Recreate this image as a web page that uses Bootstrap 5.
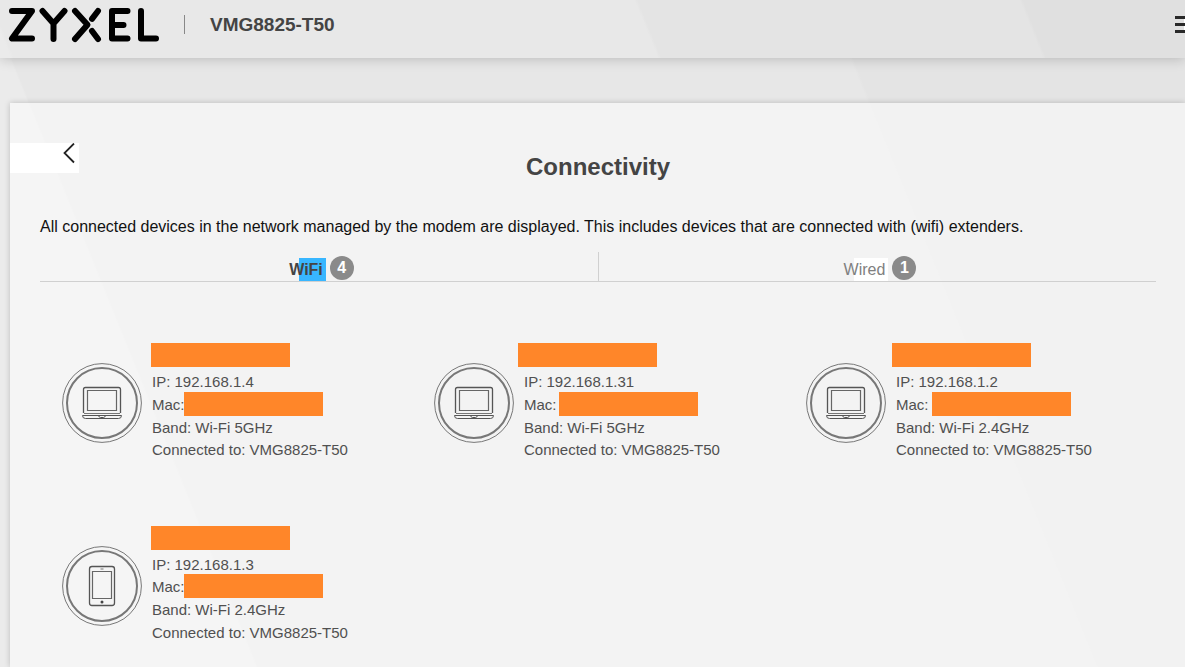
<!DOCTYPE html>
<html lang="en">
<head>
<meta charset="utf-8">
<meta name="viewport" content="width=device-width, initial-scale=1">
<title>VMG8825-T50 - Connectivity</title>
<link href="https://cdn.jsdelivr.net/npm/bootstrap@5.3.0/dist/css/bootstrap.min.css" rel="stylesheet">
<style>
body{font-family:"Liberation Sans",Arial,sans-serif;font-size:16px;color:#111;min-height:100vh;overflow-x:hidden;
 background:linear-gradient(68deg,#ebebeb 237px,#e7e7e7 239px,#e7e7e7 1016px,#e4e4e4 1019px) no-repeat}
.topbar{height:58px;position:relative;box-shadow:0 1px 12px rgba(0,0,0,.2);
 background:linear-gradient(68deg,#ebebeb 10px,#e8e8e8 13px,#e8e8e8 610px,#e4e4e4 613px,#e4e4e4 967px,#e0e0e0 970px)}
.model-name{font-size:19px;font-weight:700;color:#444;line-height:20px;margin:15px 0 0 25px}
.brand-rule{width:1px;height:19px;background:#888;margin:15px 0 0 24px}
.menu-btn{width:10px;height:17px;margin-top:16px;overflow:hidden}
.panel{margin:45px 0 0 10px;min-height:calc(100vh - 103px);padding:40px 29px 16px 30px;background:rgba(255,255,255,.5);box-shadow:0 0 6px rgba(0,0,0,.2)}
.back-btn{width:69px;height:30px;margin-left:-30px;background:#fff}
.page-title{font-size:24px;font-weight:700;color:#444;line-height:28px;margin:-20px 0 34px}
.tab-row{border-bottom:1px solid #d0d0d0;margin-top:13px}
.tab-link{height:29px;color:#808080;gap:4px;padding-top:4px;padding-left:5px}
.tab-link + .tab-link{border-left:1px solid #d0d0d0}
.tab-link.active{color:#444;font-weight:700}
.tab-text{line-height:23px;padding-right:3px;margin-top:2px;background:linear-gradient(90deg,transparent 10px,#fff 10px)}
.active .tab-text{background:linear-gradient(90deg,transparent 10px,#38b6ff 10px)}
.count{width:24px;height:24px;border-radius:50%;background:#8a8a8a;color:#fff;font-weight:700;line-height:24px}
.device-grid{padding-top:61px;row-gap:64px}
.device{padding-left:22px;gap:10px}
.device-icon{margin-top:20px}
.device-info{font-size:15px;line-height:1.5;color:#505050}
.hidden-value{display:block;width:139px;height:24px;background:#ff8629}
.host{margin:0 0 4px -1px}
.mac{margin:-2px 0 0 -1px}
.mac-line{height:23px}
.col-4:nth-child(2) .host{margin-left:-6px}
.col-4:nth-child(3) .host{margin-left:-4px}
.col-4:nth-child(2) .mac{margin-left:2px}
.col-4:nth-child(3) .mac{margin-left:3px}
</style>
<script src="https://cdn.jsdelivr.net/npm/bootstrap@5.3.0/dist/js/bootstrap.bundle.min.js"></script>
</head>
<body>
<svg class="d-none" aria-hidden="true">
 <symbol id="laptop" viewBox="0 0 80 80">
  <g fill="none" stroke="#777"><circle cx="40" cy="40" r="39.4"/><circle cx="40" cy="40" r="35" stroke-width="2"/>
  <path stroke="#555" stroke-width="1.3" d="M21.500 50V26.500Q21.500 24.500 23.500 24.500H56.500Q58.500 24.500 58.500 26.500V50"/>
  <path stroke="#666" stroke-width="1.2" d="M25.500 27.500H54.500V47.500H25.500Z"/><path d="M22 50.500H58"/>
  <path stroke="#555" d="M20.500 52.500H59.500Q59.500 55.500 56.500 55.500H23.500Q20.500 55.500 20.500 52.500ZM36.500 52.500Q37 54.500 38.500 54.500H41.500Q43 54.500 43.500 52.500"/></g>
 </symbol>
 <symbol id="phone" viewBox="0 0 80 80">
  <g fill="none" stroke="#777"><circle cx="40" cy="40" r="39.4"/><circle cx="40" cy="40" r="35" stroke-width="2"/>
  <rect x="27.500" y="20.500" width="25" height="39" rx="2.500" stroke="#555" stroke-width="1.3"/>
  <path stroke="#666" stroke-width="1.2" d="M30.500 25.500H49.500V52.500H30.500Z"/><path d="M38.500 23H41.500"/></g><circle cx="40" cy="56" r="1.500" fill="#444"/>
 </symbol>
</svg>
<header class="topbar d-flex align-items-start">
 <svg width="160" height="50" role="img" aria-label="ZYXEL" fill="none" stroke="#000" stroke-width="6" stroke-linecap="round" stroke-linejoin="round">
  <path d="M12 11H32L12 38.500H32M42.500 11L53.500 23.500L64.500 11M53.500 23.500V39M75 11L87.500 24.800L75 39M98 11L92 18.800M98 39L92 31M127.500 11H112V38.500H127.500M112 25H123.500M141 11V38.500H156"/>
 </svg>
 <div class="brand-rule"></div>
 <div class="model-name">VMG8825-T50</div>
 <button class="menu-btn btn p-0 border-0 rounded-0 ms-auto d-flex" aria-label="Menu"><svg width="10" height="17" fill="#292929"><path fill="#fff" d="M9 3H10V17H9Z"/><path d="M0 0H10V3H0ZM0 7H10V10H0ZM0 14H10V17H0Z"/></svg></button>
</header>
<main class="panel">
 <button class="back-btn btn border-0 rounded-0 p-0 d-block" aria-label="Back"><svg class="d-block ms-auto" width="18" height="30" fill="none" stroke="#222" stroke-width="1.8"><path d="M13 .5L3.500 10L13 19.500"/></svg></button>
 <h1 class="page-title text-center">Connectivity</h1>
 <p class="mb-0">All connected devices in the network managed by the modem are displayed. This includes devices that are connected with (wifi) extenders.</p>
 <nav class="tab-row row g-0">
  <a href="#wifi" class="tab-link active col-6 d-flex justify-content-center align-items-start text-decoration-none"><span class="tab-text">WiFi</span><span class="count text-center">4</span></a>
  <a href="#wired" class="tab-link col-6 d-flex justify-content-center align-items-start text-decoration-none"><span class="tab-text">Wired</span><span class="count text-center">1</span></a>
 </nav>
 <section id="wifi" class="device-grid row gx-0">
  <article class="col-4 device d-flex align-items-start"><svg class="device-icon flex-shrink-0" width="80" height="80"><use href="#laptop"/></svg>
   <div class="device-info"><span class="hidden-value host"></span><div>IP: 192.168.1.4</div><div class="mac-line d-flex">Mac:<span class="hidden-value mac"></span></div><div>Band: Wi-Fi 5GHz</div><div>Connected to: VMG8825-T50</div></div></article>
  <article class="col-4 device d-flex align-items-start"><svg class="device-icon flex-shrink-0" width="80" height="80"><use href="#laptop"/></svg>
   <div class="device-info"><span class="hidden-value host"></span><div>IP: 192.168.1.31</div><div class="mac-line d-flex">Mac:<span class="hidden-value mac"></span></div><div>Band: Wi-Fi 5GHz</div><div>Connected to: VMG8825-T50</div></div></article>
  <article class="col-4 device d-flex align-items-start"><svg class="device-icon flex-shrink-0" width="80" height="80"><use href="#laptop"/></svg>
   <div class="device-info"><span class="hidden-value host"></span><div>IP: 192.168.1.2</div><div class="mac-line d-flex">Mac:<span class="hidden-value mac"></span></div><div>Band: Wi-Fi 2.4GHz</div><div>Connected to: VMG8825-T50</div></div></article>
  <article class="col-4 device d-flex align-items-start"><svg class="device-icon flex-shrink-0" width="80" height="80"><use href="#phone"/></svg>
   <div class="device-info"><span class="hidden-value host"></span><div>IP: 192.168.1.3</div><div class="mac-line d-flex">Mac:<span class="hidden-value mac"></span></div><div>Band: Wi-Fi 2.4GHz</div><div>Connected to: VMG8825-T50</div></div></article>
 </section>
</main>
</body>
</html>
